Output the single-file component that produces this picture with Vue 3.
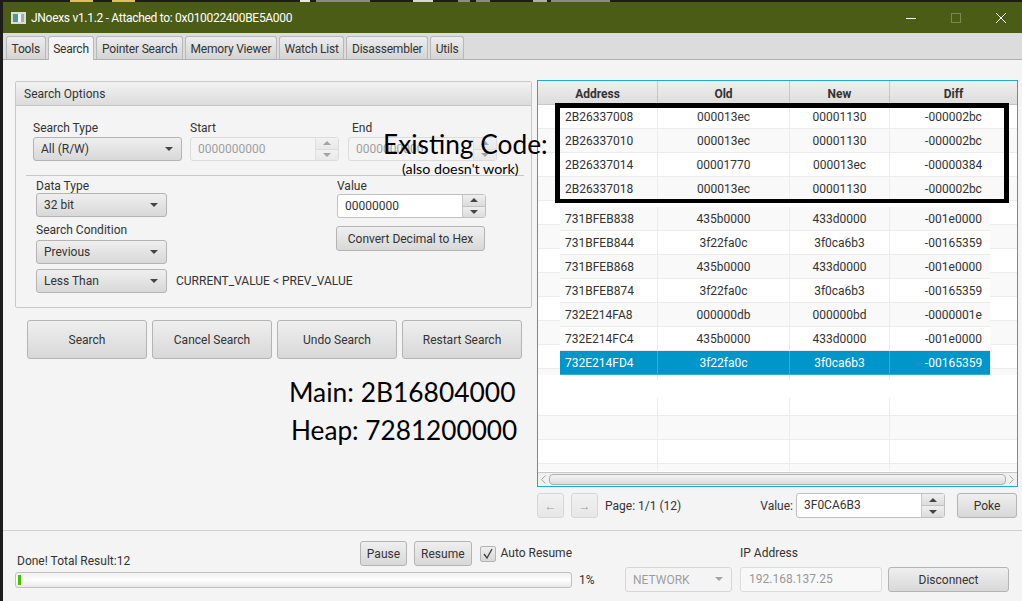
<template>
  <div class="desktop">
    <div class="desk-strip">
      <span
        v-for="s in stripBits"
        :key="s.x"
        class="bit"
        :style="{ left: s.x + 'px', width: s.w + 'px', background: s.c }"
      ></span>
    </div>
    <div class="window">
      <header class="titlebar">
        <svg class="app-icon" width="15" height="12" viewBox="0 0 15 12">
          <rect width="15" height="12" fill="#d8dcdc" />
          <rect x="2" y="2" width="5" height="8" fill="#4f9a90" />
          <rect x="7" y="2" width="3" height="8" fill="#f4f6f4" />
          <rect x="10" y="2" width="3" height="8" fill="#a8b0ae" />
        </svg>
        <span class="title-text">JNoexs v1.1.2 - Attached to: 0x010022400BE5A000</span>
        <div class="window-controls">
          <svg width="12" height="12" viewBox="0 0 12 12"><path d="M1 6.5h10" stroke="#fff" /></svg>
          <svg width="12" height="12" viewBox="0 0 12 12"><rect x="1.5" y="1.5" width="9" height="9" fill="none" stroke="#7b8a50" /></svg>
          <svg width="12" height="12" viewBox="0 0 12 12"><path d="M1 1l10 10M11 1L1 11" stroke="#fff" /></svg>
        </div>
      </header>

      <nav class="tabs">
        <span v-for="tab in tabs" :key="tab" class="tab" :class="{ active: tab === 'Search' }">{{ tab }}</span>
      </nav>

      <main class="content">
        <section class="left">
          <div class="pane">
            <div class="pane-title">Search Options</div>
            <div class="pane-body">
              <div class="range-row">
                <label class="field">
                  <span>Search Type</span>
                  <div class="combo type-combo">All (R/W)<i class="arrow"></i></div>
                </label>
                <label class="field">
                  <span>Start</span>
                  <div class="spinner disabled range-spin">
                    <span class="spin-text">0000000000</span>
                    <div class="spin-btns"><b><i class="up"></i></b><b><i class="down"></i></b></div>
                  </div>
                </label>
                <label class="field end-field">
                  <span>End</span>
                  <div class="spinner disabled range-spin">
                    <span class="spin-text">0000000000</span>
                    <div class="spin-btns"><b><i class="up"></i></b><b><i class="down"></i></b></div>
                  </div>
                </label>
              </div>
              <div class="separator"></div>
              <div class="cond-row">
                <div class="cond-left">
                  <label class="field tight">
                    <span>Data Type</span>
                    <div class="combo cond-combo">32 bit<i class="arrow"></i></div>
                  </label>
                  <label class="field tight cond-field">
                    <span>Search Condition</span>
                    <div class="combo cond-combo">Previous<i class="arrow"></i></div>
                  </label>
                  <div class="compare">
                    <div class="combo cond-combo">Less Than<i class="arrow"></i></div>
                    <span>CURRENT_VALUE &lt; PREV_VALUE</span>
                  </div>
                </div>
                <div class="cond-right">
                  <label class="field value-field">
                    <span>Value</span>
                    <div class="spinner value-spin">
                      <span class="spin-text">00000000</span>
                      <div class="spin-btns"><b><i class="up"></i></b><b><i class="down"></i></b></div>
                    </div>
                  </label>
                  <button class="btn convert" type="button">Convert Decimal to Hex</button>
                </div>
              </div>
            </div>
          </div>
          <div class="actions">
            <button v-for="a in actions" :key="a" class="btn action" type="button">{{ a }}</button>
          </div>
        </section>

        <section class="right">
          <div class="table">
            <div class="row head">
              <span v-for="c in columns" :key="c">{{ c }}</span>
            </div>
            <div class="tbody">
              <div class="striped">
                <div v-for="(r, i) in existing" :key="r[0]" class="row" :class="{ alt: i % 2 }">
                  <span v-for="c in r" :key="c">{{ c }}</span>
                </div>
                <div class="patch-gap"></div>
                <div
                  v-for="r in results"
                  :key="r.cells[0]"
                  class="row patch"
                  :class="{ alt: r.alt, selected: r.selected }"
                >
                  <span v-for="c in r.cells" :key="c">{{ c }}</span>
                </div>
              </div>
              <div class="row empty stub"><span></span><span></span><span></span><span></span></div>
              <div class="blank"></div>
              <div class="row empty first"><span></span><span></span><span></span><span></span></div>
              <div class="row empty alt"><span></span><span></span><span></span><span></span></div>
              <div class="row empty"><span></span><span></span><span></span><span></span></div>
              <div class="row empty alt last"><span></span><span></span><span></span><span></span></div>
            </div>
            <div class="hscroll">
              <svg width="5" height="9" viewBox="0 0 5 9"><path d="M4.5 .5L.5 4.5l4 4" fill="none" stroke="#a8a8a8" /></svg>
              <div class="thumb"></div>
              <svg width="5" height="9" viewBox="0 0 5 9"><path d="M.5 .5l4 4-4 4" fill="none" stroke="#a8a8a8" /></svg>
            </div>
          </div>
          <div class="pager">
            <button class="btn page-btn" type="button">←</button>
            <button class="btn page-btn" type="button">→</button>
            <span class="page-label">Page: 1/1 (12)</span>
            <span class="value-label">Value:</span>
            <div class="spinner poke-spin">
              <span class="spin-text">3F0CA6B3</span>
              <div class="spin-btns"><b><i class="up"></i></b><b><i class="down"></i></b></div>
            </div>
            <button class="btn poke" type="button">Poke</button>
          </div>
        </section>
      </main>

      <footer class="footer">
        <div class="status">
          <div class="status-top">
            <span class="done">Done! Total Result:12</span>
            <div class="status-btns">
              <button class="btn small" type="button">Pause</button>
              <button class="btn small" type="button">Resume</button>
              <span class="check">
                <svg width="14" height="14" viewBox="0 0 14 14"><path d="M3 7l3 4 5-9" fill="none" stroke="#444" stroke-width="1.4" /></svg>
              </span>
              <span class="check-label">Auto Resume</span>
            </div>
          </div>
          <div class="progress-row">
            <div class="progress"><div class="bar" :style="{ width: progress + '%' }"></div></div>
            <span>1%</span>
          </div>
        </div>
        <div class="conn">
          <div class="combo disabled net">NETWORK<i class="arrow"></i></div>
          <label class="field ip-field">
            <span>IP Address</span>
            <div class="ip">192.168.137.25</div>
          </label>
          <button class="btn disconnect" type="button">Disconnect</button>
        </div>
      </footer>

      <div class="note existing-box"></div>
      <div class="note existing-title">Existing Code:</div>
      <div class="note existing-sub">(also doesn't work)</div>
      <div class="note main-addr">Main: 2B16804000</div>
      <div class="note heap-addr">Heap: 7281200000</div>
    </div>
  </div>
</template>

<script setup>
const tabs = ['Tools', 'Search', 'Pointer Search', 'Memory Viewer', 'Watch List', 'Disassembler', 'Utils']
const actions = ['Search', 'Cancel Search', 'Undo Search', 'Restart Search']
const columns = ['Address', 'Old', 'New', 'Diff']
const progress = 0.55

// bits of the desktop that show above the window
const stripBits = [
  { x: 70, w: 23, c: '#e2bd62' },
  { x: 112, w: 23, c: '#e2bd62' },
  { x: 300, w: 10, c: '#e8e8e8' },
  { x: 316, w: 54, c: '#8a8a8a' },
  { x: 413, w: 20, c: '#d8d8d8' },
  { x: 458, w: 12, c: '#8c8c8c' },
  { x: 476, w: 14, c: '#8a8a8a' },
  { x: 533, w: 14, c: '#b0b0b0' },
  { x: 551, w: 59, c: '#8a8a8a' },
]

const existing = [
  ['2B26337008', '000013ec', '00001130', '-000002bc'],
  ['2B26337010', '000013ec', '00001130', '-000002bc'],
  ['2B26337014', '00001770', '000013ec', '-00000384'],
  ['2B26337018', '000013ec', '00001130', '-000002bc'],
]

const results = [
  { cells: ['731BFEB838', '435b0000', '433d0000', '-001e0000'], alt: true },
  { cells: ['731BFEB844', '3f22fa0c', '3f0ca6b3', '-00165359'] },
  { cells: ['731BFEB868', '435b0000', '433d0000', '-001e0000'], alt: true },
  { cells: ['731BFEB874', '3f22fa0c', '3f0ca6b3', '-00165359'] },
  { cells: ['732E214FA8', '000000db', '000000bd', '-0000001e'], alt: true },
  { cells: ['732E214FC4', '435b0000', '433d0000', '-001e0000'] },
  { cells: ['732E214FD4', '3f22fa0c', '3f0ca6b3', '-00165359'], selected: true },
]
</script>

<style>
html,
body {
  margin: 0;
  background: #1e1e1e;
  overflow: hidden;
}
</style>

<style scoped>
.desktop {
  width: 1022px;
  height: 601px;
  padding-left: 3px;
  box-sizing: border-box;
  background: #1c1c1c;
  font-family: Roboto, "Open Sans", sans-serif;
  font-size: 12px;
  color: #333;
}

.desk-strip {
  position: relative;
  height: 2px;
  margin-left: -3px;
}

.bit {
  position: absolute;
  top: 0;
  height: 2px;
}

.window {
  position: relative;
  height: 599px;
  display: flex;
  flex-direction: column;
  background: #f4f4f4;
}

.titlebar {
  height: 31px;
  flex: none;
  display: flex;
  align-items: center;
  padding-left: 8px;
  background: #4b5c17;
  color: #fff;
}

.app-icon {
  margin-right: 5px;
}

.title-text {
  font-size: 12px;
  letter-spacing: -0.3px;
}

.window-controls {
  margin-left: auto;
  display: flex;
  gap: 33px;
  padding-right: 15px;
}

.tabs {
  height: 27px;
  flex: none;
  display: flex;
  align-items: flex-end;
  gap: 2px;
  padding-left: 3px;
  box-sizing: border-box;
  background: #dcdcdc;
  border-bottom: 1px solid #b0b0b0;
}

.tab {
  height: 21px;
  padding: 1px 4.6px 0;
  display: flex;
  align-items: center;
  letter-spacing: -0.2px;
  background: linear-gradient(#ededed, #d4d4d4);
  border: 1px solid #b8b8b8;
  border-bottom: 0;
  border-radius: 3px 3px 0 0;
  color: #333;
}

.tab.active {
  height: 22px;
  margin-bottom: -1px;
  background: #f4f4f4;
}

.content {
  flex: 1;
  display: flex;
  padding: 20px 4px 0 12px;
  min-height: 0;
}

.left {
  width: 517px;
  flex: none;
  margin-right: 5px;
}

.pane {
  height: 227px;
  box-sizing: border-box;
  border: 1px solid #c8c8c8;
  border-radius: 2px;
  margin-top: 1px;
}

.pane-title {
  height: 23px;
  padding-left: 8px;
  display: flex;
  align-items: center;
  background: linear-gradient(#f2f2f2, #dcdcdc);
  border-bottom: 1px solid #c4c4c4;
}

.pane-body {
  padding: 14px 0 0 10px;
}

.field {
  display: flex;
  flex-direction: column;
  gap: 1px;
}

.field > span {
  line-height: 16px;
}

.tight {
  gap: 0;
}

.tight > span,
.value-field > span,
.ip-field > span {
  line-height: 14px;
}

.range-row {
  display: flex;
  gap: 8px;
  padding-left: 7px;
}

.end-field {
  margin-left: 1px;
}

.end-field > span {
  margin-left: 4px;
}

.combo {
  position: relative;
  height: 24px;
  box-sizing: border-box;
  display: flex;
  align-items: center;
  padding-left: 7px;
  border: 1px solid #b4b4b4;
  border-radius: 3px;
  background: linear-gradient(#efefef, #d8d8d8);
}

.arrow {
  position: absolute;
  right: 8px;
  top: 9px;
  width: 0;
  height: 0;
  border: 4px solid transparent;
  border-top: 4px solid #444;
  border-bottom: 0;
}

.type-combo {
  width: 149px;
}

.spinner {
  display: flex;
  height: 24px;
  box-sizing: border-box;
  border: 1px solid #c0c0c0;
  border-radius: 3px;
  background: #fff;
}

.spin-text {
  flex: 1;
  padding-left: 7px;
  line-height: 22px;
}

.spin-btns {
  width: 22px;
  display: flex;
  flex-direction: column;
  border-left: 1px solid #c8c8c8;
}

.spin-btns b {
  flex: 1;
  display: flex;
  align-items: center;
  justify-content: center;
  background: linear-gradient(#efefef, #dcdcdc);
}

.spin-btns b + b {
  border-top: 1px solid #c0c0c0;
}

.up,
.down {
  width: 0;
  height: 0;
  border: 4px solid transparent;
}

.up {
  border-top: 0;
  border-bottom: 4px solid #444;
}

.down {
  border-bottom: 0;
  border-top: 4px solid #444;
}

.disabled {
  opacity: 0.45;
  background: #f4f4f4;
}

.range-spin {
  width: 149px;
}

.separator {
  height: 1px;
  width: 498px;
  margin: 14px 0 3px;
  background: #c8c8c8;
}

.cond-row {
  display: flex;
  padding-left: 10px;
}

.cond-left {
  width: 301px;
  flex: none;
  display: flex;
  flex-direction: column;
}

.cond-combo {
  width: 131px;
  flex: none;
}

.cond-field {
  margin-top: 6px;
  gap: 3px;
}

.compare {
  display: flex;
  align-items: center;
  gap: 9px;
  margin-top: 5px;
  white-space: nowrap;
}

.cond-right {
  display: flex;
  flex-direction: column;
  gap: 8px;
}

.value-spin {
  width: 149px;
}

.btn {
  padding: 0;
  border: 1px solid #b4b4b4;
  border-radius: 3px;
  background: linear-gradient(#efefef, #d8d8d8);
  font-family: inherit;
  font-size: 12px;
  color: #333;
}

.convert {
  width: 149px;
  height: 25px;
  margin-left: -1px;
}

.actions {
  display: flex;
  gap: 5px;
  margin: 12px 0 0 12px;
}

.action {
  width: 120px;
  height: 39px;
}

.right {
  width: 481px;
  flex: none;
}

.table {
  box-sizing: border-box;
  height: 407px;
  border: 1px solid #1fa8d8;
  background: #fff;
  display: flex;
  flex-direction: column;
}

.row {
  display: grid;
  grid-template-columns: 120px 132px 100px 1fr;
  height: 24px;
  box-sizing: border-box;
  border-bottom: 1px solid #ececec;
  background: #fff;
  line-height: 25px;
  text-align: center;
}

.row span {
  border-right: 1px solid #ececec;
}

.row span:last-child {
  border-right: 0;
}

.row span:first-child {
  text-align: left;
  padding-left: 27px;
}

.row.alt {
  background: #f9f9f9;
}

.head {
  height: 24px;
  flex: none;
  background: linear-gradient(#f0f0f0, #dcdcdc);
  border-bottom: 1px solid #c8c8c8;
  font-weight: 700;
  line-height: 26px;
}

.head span {
  border-right-color: #c8c8c8;
}

.head span:first-child {
  text-align: center;
  padding-left: 0;
}

.tbody {
  flex: 1;
  min-height: 0;
  overflow: hidden;
}

/* underlying rows keep showing beside the pasted-in part of the table */
.striped {
  background: repeating-linear-gradient(
    #fff 0 23px,
    #ececec 23px 24px,
    #f9f9f9 24px 47px,
    #ececec 47px 48px
  );
}

.patch-gap {
  height: 6px;
  background: #fff;
}

.patch {
  clip-path: inset(0 27px 0 22px);
}

.selected {
  background: #0096c9;
  color: #fff;
  border-bottom-color: #34aad6;
}

.selected span {
  border-right-color: #34aad6;
}

.empty {
  height: 24px;
}

.stub {
  height: 5px;
  border-bottom: 0;
}

.blank {
  height: 18px;
}

.empty.first {
  height: 18px;
}

.empty.last {
  height: 7px;
  border-bottom: 0;
}

.hscroll {
  height: 14px;
  flex: none;
  display: flex;
  align-items: center;
  gap: 3px;
  padding: 0 3px;
  background: #f0f0f0;
  border-top: 1px solid #c8c8c8;
  box-sizing: border-box;
}

.thumb {
  flex: 1;
  height: 9px;
  border: 1px solid #b0b0b0;
  border-radius: 4px;
  background: linear-gradient(#f4f4f4, #dcdcdc);
}

.pager {
  display: flex;
  align-items: center;
  margin-top: 6px;
  padding-right: 1px;
  height: 25px;
  white-space: nowrap;
}

.page-btn {
  width: 27px;
  height: 25px;
  margin-right: 7px;
  opacity: 0.45;
}

.value-label {
  margin-left: auto;
}

.poke-spin {
  width: 149px;
  height: 25px;
  margin-left: 3px;
  flex: none;
}

.poke-spin .spin-text {
  line-height: 23px;
}

.poke {
  width: 60px;
  height: 25px;
  margin-left: 12px;
  flex: none;
}

.footer {
  height: 71px;
  flex: none;
  box-sizing: border-box;
  display: flex;
  border-top: 1px solid #d0d0d0;
  padding: 10px 0 0 12px;
}

.status {
  width: 610px;
  flex: none;
}

.status-top {
  width: 557px;
  height: 29px;
  display: flex;
  align-items: flex-end;
}

.done {
  line-height: 16px;
  margin-left: 2px;
  margin-bottom: 1px;
}

.status-btns {
  margin-left: auto;
  align-self: flex-start;
  display: flex;
  align-items: center;
  gap: 7px;
}

.small {
  height: 25px;
  padding: 0 6px;
}

.check {
  width: 14px;
  height: 14px;
  margin-left: 1px;
  border: 1px solid #b4b4b4;
  border-radius: 2px;
  background: linear-gradient(#efefef, #d8d8d8);
}

.check-label {
  margin-top: -2px;
  margin-left: -2px;
}

.progress-row {
  display: flex;
  align-items: center;
  gap: 7px;
  margin-top: 2px;
}

.progress {
  width: 557px;
  height: 16px;
  box-sizing: border-box;
  border: 1px solid #c0c0c0;
  border-radius: 3px;
  padding: 2px;
  background: linear-gradient(#f0f0f0, #ffffff 50%, #e8e8e8);
}

.bar {
  height: 100%;
  background: #44c000;
}

.conn {
  height: 51px;
  display: flex;
  align-items: flex-end;
  gap: 8px;
}

.net {
  width: 107px;
  height: 25px;
}

.ip-field {
  gap: 7px;
}

.ip {
  width: 142px;
  height: 25px;
  box-sizing: border-box;
  padding-left: 8px;
  line-height: 23px;
  border: 1px solid #dcdcdc;
  border-radius: 3px;
  background: #f8f8f8;
  color: #999;
}

.disconnect {
  width: 121px;
  height: 25px;
  margin-left: -2px;
}

.note {
  position: absolute;
  color: #000;
  font-family: Lato, "Open Sans", sans-serif;
  white-space: nowrap;
}

.existing-box {
  left: 552px;
  top: 101px;
  width: 454px;
  height: 100px;
  box-sizing: border-box;
  border: 5px solid #000;
  border-bottom-width: 4px;
}

.existing-title {
  left: 380px;
  top: 127px;
  font-size: 26.3px;
  line-height: 30px;
}

.existing-sub {
  left: 399px;
  top: 158px;
  font-size: 14.3px;
  line-height: 18px;
}

.main-addr {
  left: 286px;
  top: 374px;
  font-size: 26.4px;
  line-height: 32px;
}

.heap-addr {
  left: 288px;
  top: 412px;
  font-size: 26.2px;
  line-height: 32px;
}
</style>
